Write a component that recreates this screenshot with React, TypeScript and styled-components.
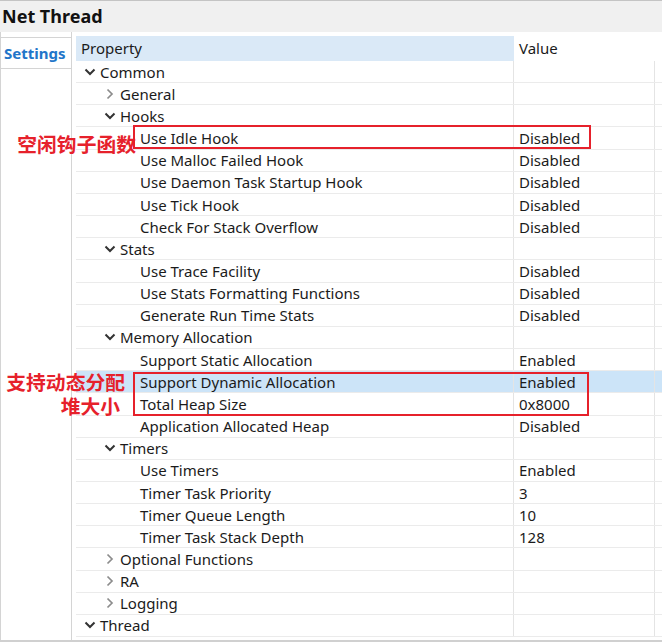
import styled, {createGlobalStyle} from "styled-components";

const GlobalStyle = createGlobalStyle`
    html, body {
        margin: 0;
        padding: 0;
        background: #ffffff;
    }
`

type Node = {
    label: string
    level: number
    kind: 'open' | 'closed' | 'leaf'
    value?: string
    selected?: boolean
}

const rows: Node[] = [
    {label: 'Common', level: 0, kind: 'open'},
    {label: 'General', level: 1, kind: 'closed'},
    {label: 'Hooks', level: 1, kind: 'open'},
    {label: 'Use Idle Hook', level: 2, kind: 'leaf', value: 'Disabled'},
    {label: 'Use Malloc Failed Hook', level: 2, kind: 'leaf', value: 'Disabled'},
    {label: 'Use Daemon Task Startup Hook', level: 2, kind: 'leaf', value: 'Disabled'},
    {label: 'Use Tick Hook', level: 2, kind: 'leaf', value: 'Disabled'},
    {label: 'Check For Stack Overflow', level: 2, kind: 'leaf', value: 'Disabled'},
    {label: 'Stats', level: 1, kind: 'open'},
    {label: 'Use Trace Facility', level: 2, kind: 'leaf', value: 'Disabled'},
    {label: 'Use Stats Formatting Functions', level: 2, kind: 'leaf', value: 'Disabled'},
    {label: 'Generate Run Time Stats', level: 2, kind: 'leaf', value: 'Disabled'},
    {label: 'Memory Allocation', level: 1, kind: 'open'},
    {label: 'Support Static Allocation', level: 2, kind: 'leaf', value: 'Enabled'},
    {label: 'Support Dynamic Allocation', level: 2, kind: 'leaf', value: 'Enabled', selected: true},
    {label: 'Total Heap Size', level: 2, kind: 'leaf', value: '0x8000'},
    {label: 'Application Allocated Heap', level: 2, kind: 'leaf', value: 'Disabled'},
    {label: 'Timers', level: 1, kind: 'open'},
    {label: 'Use Timers', level: 2, kind: 'leaf', value: 'Enabled'},
    {label: 'Timer Task Priority', level: 2, kind: 'leaf', value: '3'},
    {label: 'Timer Queue Length', level: 2, kind: 'leaf', value: '10'},
    {label: 'Timer Task Stack Depth', level: 2, kind: 'leaf', value: '128'},
    {label: 'Optional Functions', level: 1, kind: 'closed'},
    {label: 'RA', level: 1, kind: 'closed'},
    {label: 'Logging', level: 1, kind: 'closed'},
    {label: 'Thread', level: 0, kind: 'open'},
]

const Chevron = ({kind}: { kind: Node['kind'] }) => {
    if (kind === 'leaf') return <Toggle/>
    return (
        <Toggle>
            {kind === 'open' ? (
                <svg width="12" height="8" viewBox="0 0 12 8">
                    <polyline points="1.5,1.5 6,6 10.5,1.5" fill="none" stroke="#333333" strokeWidth="2"/>
                </svg>
            ) : (
                <svg width="8" height="12" viewBox="0 0 8 12">
                    <polyline points="1.5,1.5 6,6 1.5,10.5" fill="none" stroke="#8c8c8c" strokeWidth="1.7"/>
                </svg>
            )}
        </Toggle>
    )
}

export default function App() {
    return (
        <>
            <GlobalStyle/>
            <Window>
                <TitleBar>Net Thread</TitleBar>
                <Body>
                    <TabColumn>
                        <Tab>Settings</Tab>
                    </TabColumn>
                    <Table>
                        <HeaderRow>
                            <HeaderCell $accent>Property</HeaderCell>
                            <HeaderCell>Value</HeaderCell>
                            <HeaderCell/>
                        </HeaderRow>
                        {rows.map((row, i) => (
                            <Row key={i} $selected={row.selected}>
                                <NameCell $level={row.level}>
                                    <Chevron kind={row.kind}/>
                                    {row.label}
                                </NameCell>
                                <ValueCell>{row.value}</ValueCell>
                                <Filler/>
                            </Row>
                        ))}
                    </Table>
                </Body>

                {/* annotations drawn over the tree */}
                <Frame $top={124} $left={133} $width={458} $height={24}/>
                <Frame $top={371} $left={133} $width={456} $height={44}/>

                <Note $top={131} $right={526}>空闲钩子函数</Note>
                <Note $top={369} $right={537}>
                    支持动态分配<br/>堆大小<Gap/>
                </Note>
            </Window>
        </>
    )
}

const Window = styled.div`
    position: relative;
    width: 662px;
    height: 642px;
    box-sizing: border-box;
    border-top: 1px solid #c4c4c4;
    border-bottom: 2px solid #d0d0d0;
    font-family: "Noto Sans", "Open Sans", sans-serif;
    font-size: 15px;
    color: #1b1b1b;
    overflow: hidden;
`

const TitleBar = styled.div`
    height: 31px;
    background: #f0f0f0;
    padding-left: 2px;
    font-size: 18px;
    font-weight: bold;
    line-height: 31px;
    color: #111111;
`

const Body = styled.div`
    display: flex;
    height: 608px;
`

const TabColumn = styled.div`
    width: 72px;
    flex-shrink: 0;
    border-left: 1px solid #d4d4d4;
    border-right: 1px solid #d4d4d4;
    box-sizing: border-box;
    padding-top: 5px;
`

const Tab = styled.div`
    height: 30px;
    border-top: 1px solid #d4d4d4;
    border-bottom: 1px solid #d4d4d4;
    padding-left: 3px;
    font-size: 15px;
    font-weight: bold;
    line-height: 30px;
    color: #2275c9;
`

const Table = styled.div`
    flex: 1;
    margin-left: 4px;
    padding-top: 4px;
`

const HeaderRow = styled.div`
    display: grid;
    grid-template-columns: 438px 141px 1fr;
    height: 25px;
`

const HeaderCell = styled.div<{ $accent?: boolean }>`
    background: ${p => p.$accent ? '#dae9f7' : '#ffffff'};
    padding-left: 5px;
    line-height: 25px;
`

const Row = styled.div<{ $selected?: boolean }>`
    display: grid;
    grid-template-columns: 438px 141px 1fr;
    height: 22.16px;
    box-sizing: border-box;
    border-bottom: 1px solid #ebebeb;
    background: ${p => p.$selected ? '#cce4f8' : 'transparent'};
`

const NameCell = styled.div<{ $level: number }>`
    display: flex;
    align-items: center;
    padding-left: ${p => 4 + p.$level * 20}px;
    border-right: 1px solid #e4e4e4;
    white-space: nowrap;
`

const Toggle = styled.span`
    width: 20px;
    height: 20px;
    display: inline-flex;
    align-items: center;
    justify-content: center;
    flex-shrink: 0;
`

const ValueCell = styled.div`
    display: flex;
    align-items: center;
    padding-left: 5px;
    border-right: 1px solid #e4e4e4;
`

const Filler = styled.div``

const Frame = styled.div<{ $top: number, $left: number, $width: number, $height: number }>`
    position: absolute;
    top: ${p => p.$top}px;
    left: ${p => p.$left}px;
    width: ${p => p.$width}px;
    height: ${p => p.$height}px;
    box-sizing: border-box;
    border: 2px solid #e6212b;
`

const Note = styled.div<{ $top: number, $right: number }>`
    position: absolute;
    top: ${p => p.$top}px;
    right: ${p => p.$right}px;
    text-align: right;
    white-space: nowrap;
    font-family: "Noto Sans CJK SC", sans-serif;
    font-size: 19.8px;
    font-weight: bold;
    line-height: 24px;
    color: #e6212b;
`

const Gap = styled.span`
    display: inline-block;
    width: 5px;
`
